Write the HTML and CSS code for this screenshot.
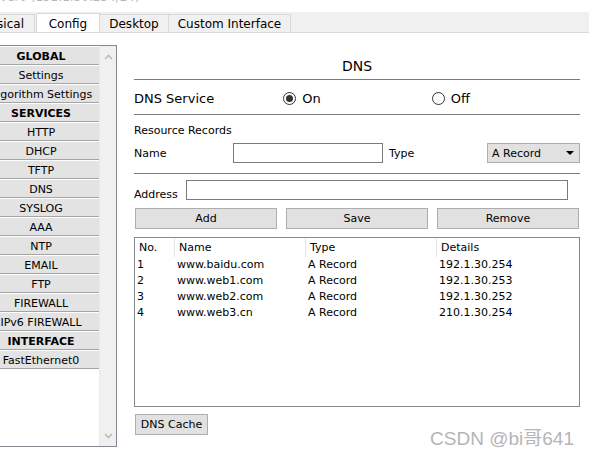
FILE: index.html
```html
<!DOCTYPE html>
<html lang="en">
<head>
    <meta charset="UTF-8">
    <meta name="viewport" content="width=device-width, initial-scale=1.0">
    <title>Server Config - DNS</title>
    <link rel="stylesheet" href="styles.css">
</head>
<body>
    <div class="window-title"><span>Server0 (192.1.30.254/24)</span></div>

    <div class="tabs">
        <div class="tab tab-cut">Physical</div>
        <div class="tab active">Config</div>
        <div class="tab tab-desktop">Desktop</div>
        <div class="tab tab-custom">Custom Interface</div>
    </div>

    <div class="main">
        <div class="sidebar">
            <div class="menu">
                <div class="item head">GLOBAL</div>
                <div class="item">Settings</div>
                <div class="item">Algorithm Settings</div>
                <div class="item head">SERVICES</div>
                <div class="item">HTTP</div>
                <div class="item">DHCP</div>
                <div class="item">TFTP</div>
                <div class="item">DNS</div>
                <div class="item">SYSLOG</div>
                <div class="item">AAA</div>
                <div class="item">NTP</div>
                <div class="item">EMAIL</div>
                <div class="item">FTP</div>
                <div class="item">FIREWALL</div>
                <div class="item">IPv6 FIREWALL</div>
                <div class="item head">INTERFACE</div>
                <div class="item">FastEthernet0</div>
            </div>
            <div class="scrollbar">
                <svg width="9" height="6" viewBox="0 0 9 6"><path d="M1 5 L4.5 1.5 L8 5" fill="none" stroke="#b4b4b4" stroke-width="1.3"/></svg>
                <svg width="9" height="6" viewBox="0 0 9 6"><path d="M1 1 L4.5 4.5 L8 1" fill="none" stroke="#b4b4b4" stroke-width="1.3"/></svg>
            </div>
        </div>

        <div class="content">
            <div class="page-title">DNS</div>

            <div class="service-row">
                <span class="service-label">DNS Service</span>
                <span class="option on"><span class="radio checked"></span>On</span>
                <span class="option"><span class="radio"></span>Off</span>
            </div>

            <div class="records">
                <div class="section-label">Resource Records</div>
                <div class="name-row">
                    <span class="name-label">Name</span>
                    <input type="text" class="field name-field">
                    <span class="type-label">Type</span>
                    <div class="select">A Record<span class="arrow"></span></div>
                </div>
            </div>

            <div class="address-row">
                <span class="address-label">Address</span>
                <input type="text" class="field address-field">
            </div>

            <div class="actions">
                <button class="btn">Add</button>
                <button class="btn">Save</button>
                <button class="btn">Remove</button>
            </div>

            <div class="table-box">
                <div class="row header">
                    <div class="cell c1">No.</div>
                    <div class="cell c2">Name</div>
                    <div class="cell c3">Type</div>
                    <div class="cell c4">Details</div>
                </div>
                <div class="row">
                    <div class="cell c1">1</div>
                    <div class="cell c2">www.baidu.com</div>
                    <div class="cell c3">A Record</div>
                    <div class="cell c4">192.1.30.254</div>
                </div>
                <div class="row">
                    <div class="cell c1">2</div>
                    <div class="cell c2">www.web1.com</div>
                    <div class="cell c3">A Record</div>
                    <div class="cell c4">192.1.30.253</div>
                </div>
                <div class="row">
                    <div class="cell c1">3</div>
                    <div class="cell c2">www.web2.com</div>
                    <div class="cell c3">A Record</div>
                    <div class="cell c4">192.1.30.252</div>
                </div>
                <div class="row">
                    <div class="cell c1">4</div>
                    <div class="cell c2">www.web3.cn</div>
                    <div class="cell c3">A Record</div>
                    <div class="cell c4">210.1.30.254</div>
                </div>
            </div>

            <button class="btn cache-btn">DNS Cache</button>
        </div>
    </div>

    <div class="watermark">CSDN @bi哥641</div>
</body>
</html>
```

FILE: styles.css
```css
/* Packet Tracer style server config window */
body {
    font-family: "DejaVu Sans", Verdana, sans-serif;
    font-size: 11px;
    color: #000;
    background-color: #fff;
    margin: 0;
    padding: 0;
    width: 589px;
    height: 458px;
    overflow: hidden;
    position: relative;
}

.window-title {
    height: 12px;
    overflow: hidden;
    color: #b8b8b8;
    font-size: 12px;
}

.window-title span {
    display: block;
    margin-top: -10px;
    margin-left: -20px;
    line-height: 14px;
}

/* tabs */
.tabs {
    display: flex;
    align-items: flex-end;
    height: 20px;
    background-color: #f0f0f0;
    border-bottom: 1px solid #d9d9d9;
    overflow: hidden;
}

.tab {
    box-sizing: border-box;
    height: 18px;
    line-height: 18px;
    text-align: center;
    font-size: 12px;
    border: 1px solid #d9d9d9;
    border-bottom: none;
    border-left: none;
    background-color: #f0f0f0;
    white-space: nowrap;
}

.tab-cut {
    width: 60px;
    margin-left: -25px;
    padding-right: 10px;
    text-align: right;
    overflow: hidden;
}

.tab.active {
    width: 64px;
    height: 20px;
    line-height: 21px;
    background-color: #fff;
    margin-left: 1px;
    margin-bottom: -1px;
    border-left: 1px solid #d9d9d9;
}

.tab-desktop {
    width: 69px;
}

.tab-custom {
    width: 122px;
}

/* layout */
.main {
    display: flex;
    padding-top: 12px;
}

.sidebar {
    display: flex;
    margin-left: -17px;
    height: 400px;
    border: 1px solid #828790;
    border-left: none;
    background-color: #f0f0f0;
}

.menu {
    width: 116px;
    padding-top: 1px;
    background-color: #fff;
}

.item {
    height: 17px;
    line-height: 19px;
    text-align: center;
    white-space: nowrap;
    overflow: hidden;
    background-color: #e3e3e3;
    border-bottom: 1px solid #a5a5a5;
    margin-bottom: 1px;
    font-size: 11px;
}

.item.head {
    font-weight: bold;
}

.scrollbar {
    width: 17px;
    display: flex;
    flex-direction: column;
    justify-content: space-between;
    align-items: center;
    padding: 8px 0 7px;
    box-sizing: border-box;
    border-left: 1px solid #e8e8e8;
}

.content {
    margin-left: 17px;
    width: 446px;
}

.page-title {
    height: 35px;
    box-sizing: border-box;
    padding-top: 12px;
    line-height: 18px;
    text-align: center;
    font-size: 14px;
    border-bottom: 1px solid #7a7a7a;
}

.service-row {
    display: flex;
    align-items: center;
    box-sizing: border-box;
    height: 35px;
    padding-top: 3px;
    border-bottom: 1px solid #7a7a7a;
    font-size: 13px;
}

.service-label {
    width: 151px;
}

.option {
    display: flex;
    align-items: center;
    width: 150px;
}

.radio {
    width: 11px;
    height: 11px;
    border: 1px solid #333;
    border-radius: 50%;
    margin-right: 6px;
    position: relative;
    background-color: #fff;
}

.radio.checked::after {
    content: "";
    position: absolute;
    left: 2px;
    top: 2px;
    width: 7px;
    height: 7px;
    border-radius: 50%;
    background-color: #333;
}

.records {
    height: 58px;
    border-bottom: 1px solid #7a7a7a;
}

.section-label {
    padding-top: 9px;
    line-height: 14px;
    height: 18px;
}

.name-row {
    display: flex;
    align-items: center;
    height: 20px;
    padding-top: 1px;
}

.name-label {
    width: 99px;
}

.field {
    box-sizing: border-box;
    height: 20px;
    border: 1px solid #7a7a7a;
    margin: 0;
    padding: 0 3px;
    font-family: inherit;
    font-size: 11px;
}

.name-field {
    width: 150px;
}

.type-label {
    margin-left: 6px;
    width: 98px;
}

.select {
    box-sizing: border-box;
    width: 93px;
    height: 20px;
    line-height: 19px;
    padding-left: 4px;
    border: 1px solid #adadad;
    background-color: #e1e1e1;
    position: relative;
}

.select .arrow {
    position: absolute;
    right: 5px;
    top: 7px;
    border-left: 4px solid transparent;
    border-right: 4px solid transparent;
    border-top: 4px solid #000;
}

.address-row {
    display: flex;
    align-items: flex-end;
    margin-top: 6px;
    height: 20px;
}

.address-label {
    width: 52px;
    line-height: 14px;
    margin-bottom: -2px;
}

.address-field {
    width: 382px;
}

.actions {
    display: flex;
    justify-content: space-between;
    margin-top: 8px;
    padding-left: 1px;
    width: 444px;
}

.btn {
    box-sizing: border-box;
    width: 142px;
    height: 21px;
    margin: 0;
    padding: 0;
    border: 1px solid #adadad;
    background-color: #e1e1e1;
    font-family: inherit;
    font-size: 11px;
    color: #000;
}

.table-box {
    box-sizing: border-box;
    margin-top: 8px;
    width: 446px;
    height: 170px;
    border: 1px solid #828790;
    background-color: #fff;
}

.row {
    display: flex;
    height: 16px;
    line-height: 16px;
    white-space: nowrap;
}

.row.header {
    height: 19px;
    line-height: 19px;
}

.cell {
    box-sizing: border-box;
    padding-left: 2px;
}

.header .cell {
    padding-left: 4px;
    border-right: 1px solid #e5e5e5;
}

.c1 { width: 40px; }
.c2 { width: 131px; }
.c3 { width: 131px; }
.c4 { flex: 1; }

.header .c4 {
    border-right: none;
}

.cache-btn {
    width: 73px;
    margin-top: 7px;
    margin-left: 1px;
    height: 21px;
    font-size: 11px;
}

.watermark {
    position: absolute;
    right: 15px;
    bottom: 8px;
    font-family: "Liberation Sans", Arial, "Noto Sans CJK SC", sans-serif;
    font-size: 19px;
    color: #b5b5b5;
    text-shadow: 0 0 1px #fff;
}
```
